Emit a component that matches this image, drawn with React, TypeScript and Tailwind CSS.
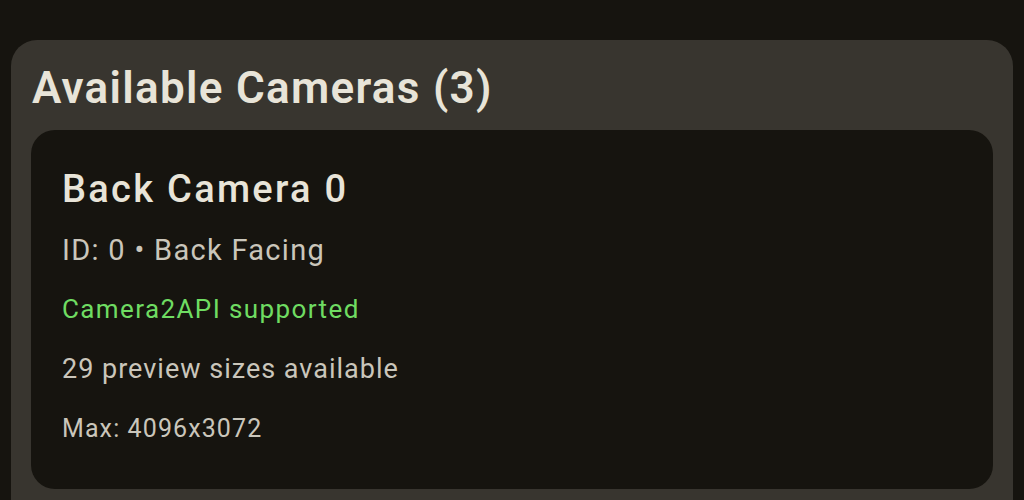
const camera = {
  name: "Back Camera 0",
  id: 0,
  facing: "Back Facing",
  previewSizes: 29,
  max: "4096x3072",
};

export default function App() {
  return (
    <div
      className="h-[500px] w-[1024px] overflow-hidden bg-[#16140f] px-[11px] pt-[40px]"
      style={{ fontFamily: "Roboto, 'Noto Sans', sans-serif" }}
    >
      <div className="h-[600px] rounded-[26px] bg-[#38352f] px-[20px] pt-[22px]">
        <h2 className="ml-[1px] text-[44px] leading-[52px] font-semibold tracking-[1.3px] text-[#e8e4d8]">
          Available Cameras (3)
        </h2>

        <div className="mt-[16px] rounded-[24px] bg-[#16140f] px-[31px] pt-[37px] pb-[44px]">
          <h3 className="text-[38px] leading-[44px] font-medium tracking-[2.3px] text-[#e8e4d8]">
            {camera.name}
          </h3>
          <p className="mt-[21px] text-[29px] leading-[36px] tracking-[1.3px] text-[#cac6bb]">
            ID: {camera.id} • {camera.facing}
          </p>
          <p className="mt-[23px] text-[26px] leading-[36px] tracking-[1.4px] text-[#6fdc62]">
            Camera2API supported
          </p>
          <p className="mt-[24px] text-[27px] leading-[36px] tracking-[1px] text-[#cac6bb]">
            {camera.previewSizes} preview sizes available
          </p>
          <p className="mt-[26px] text-[25px] leading-[32px] tracking-[1.1px] text-[#cac6bb]">
            Max: {camera.max}
          </p>
        </div>
      </div>
    </div>
  );
}
